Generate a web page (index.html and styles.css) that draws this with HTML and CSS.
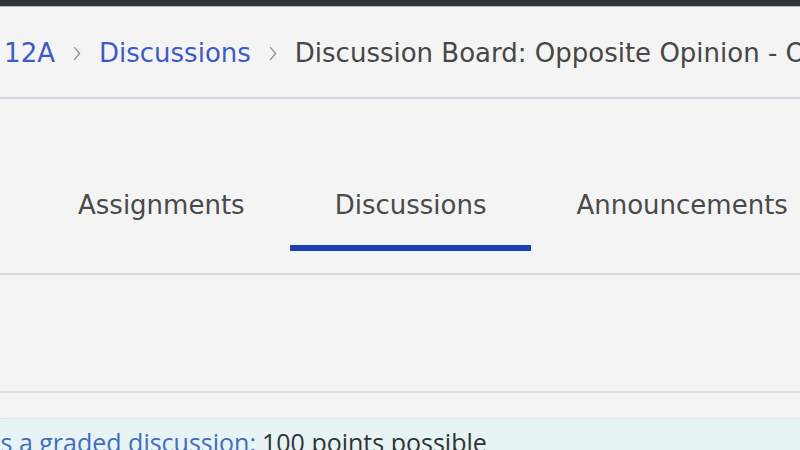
FILE: index.html
```html
<!DOCTYPE html>
<html lang="en">
<head>
<meta charset="utf-8">
<title>Discussion Board</title>
<link rel="stylesheet" href="styles.css">
</head>
<body>
<div class="topbar"></div>
<nav class="breadcrumb">
  <div class="crumb-clip"><a class="crumb link" href="#">Composition 12A</a></div>
  <svg class="chev" width="8" height="15" viewBox="0 0 8 15"><path d="M1.2 1.2 L6.6 7.5 L1.2 13.8" fill="none" stroke="#8f8f8f" stroke-width="1.3"/></svg>
  <a class="crumb link" href="#">Discussions</a>
  <svg class="chev" width="8" height="15" viewBox="0 0 8 15"><path d="M1.2 1.2 L6.6 7.5 L1.2 13.8" fill="none" stroke="#8f8f8f" stroke-width="1.3"/></svg>
  <span class="crumb current">Discussion Board: Opposite Opinion - Opposing Views</span>
</nav>
<div class="tabs">
  <a class="tab" href="#">Assignments</a>
  <a class="tab active" href="#">Discussions</a>
  <a class="tab" href="#">Announcements</a>
</div>
<div class="spacer"></div>
<div class="notice">
  <div class="notice-clip"><a class="notice-link" href="#">This is a graded discussion:</a></div>
  <span class="notice-text">100 points possible</span>
</div>
</body>
</html>
```
FILE: styles.css
```css
html, body {
  margin: 0;
  padding: 0;
  height: 450px;
  overflow: hidden;
  background: #f4f4f4;
}
body {
  font-family: "DejaVu Sans", sans-serif;
}
a { text-decoration: none; }

.topbar {
  height: 6px;
  background: #2f3536;
  border-bottom: 1px solid #b9b9b9;
}

.breadcrumb {
  display: flex;
  align-items: center;
  gap: 18px;
  padding: 30px 0 28px 0;
  white-space: nowrap;
  overflow: hidden;
  border-bottom: 2px solid #d4d3de;
  font-size: 26px;
  line-height: 32px;
}
.crumb-clip {
  width: 55px;
  flex: none;
  display: flex;
  justify-content: flex-end;
  overflow: hidden;
}
.crumb { flex: none; }
.link { color: #3d5bc7; }
.current { color: #474747; }
.chev { flex: none; display: block; }

.tabs {
  display: flex;
  padding: 90px 0 22px 33px;
  border-bottom: 2px solid #dbd8d8;
  white-space: nowrap;
}
.tab {
  font-size: 26px;
  line-height: 32px;
  color: #4a4a4a;
  padding: 0 45px 24px 45px;
  border-bottom: 6px solid transparent;
}
.tab.active {
  border-bottom-color: #1f3fb6;
}

.spacer {
  height: 116px;
  border-bottom: 2px solid #dcdcdc;
  margin-bottom: 25px;
}

.notice {
  display: flex;
  align-items: flex-start;
  background: #e7f4f5;
  border-top: 1px dotted #cfe4e8;
  padding-top: 6px;
  height: 40px;
  font-family: "Open Sans", sans-serif;
  font-size: 25px;
  line-height: 35px;
  white-space: nowrap;
}
.notice-clip {
  width: 256px;
  flex: none;
  display: flex;
  justify-content: flex-end;
  overflow: hidden;
}
.notice-link { color: #426cbd; }
.notice-text {
  color: #333333;
  margin-left: 6px;
}
```
